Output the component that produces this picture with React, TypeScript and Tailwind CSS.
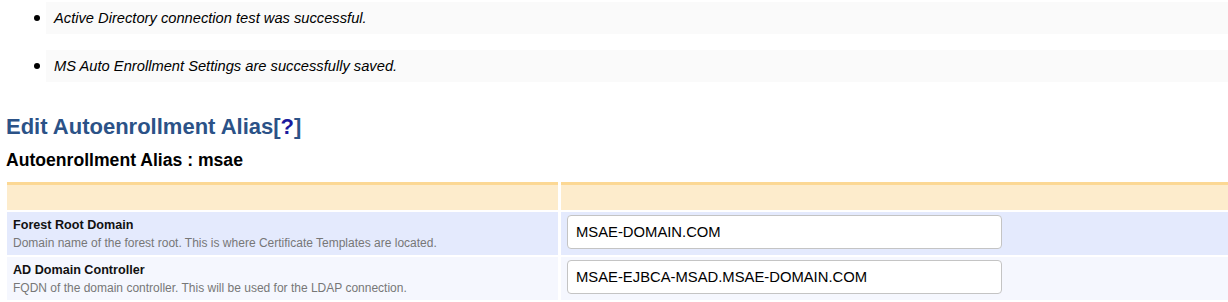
import React from "react";

const messages = [
  "Active Directory connection test was successful.",
  "MS Auto Enrollment Settings are successfully saved.",
];

const rows = [
  {
    label: "Forest Root Domain",
    help: "Domain name of the forest root. This is where Certificate Templates are located.",
    value: "MSAE-DOMAIN.COM",
    bg: "bg-[#e4eafd]",
  },
  {
    label: "AD Domain Controller",
    help: "FQDN of the domain controller. This will be used for the LDAP connection.",
    value: "MSAE-EJBCA-MSAD.MSAE-DOMAIN.COM",
    bg: "bg-[#f5f7fe]",
  },
];

export default function App() {
  return (
    <div className="flex h-[302px] w-[1228px] flex-col overflow-hidden bg-white font-['Liberation_Sans',Arial,sans-serif] text-black">
      <ul className="flex flex-col gap-[16px] pt-[2px]">
        {messages.map((m) => (
          <li key={m} className="ml-[46px] flex h-[32px] items-center bg-[#fafafa]">
            <span className="-ml-[12px] mr-[14px] h-[6px] w-[6px] rounded-full bg-black" />
            <span className="text-[14.7px] italic">{m}</span>
          </li>
        ))}
      </ul>

      <h2 className="ml-[6px] mt-[32px] text-[22px] font-bold leading-[26px] text-[#2b5287]">
        Edit Autoenrollment Alias[<span className="text-[#1a1a9e]">?</span>]
      </h2>
      <h3 className="ml-[6px] mt-[10px] text-[17.6px] font-bold leading-[20px]">Autoenrollment Alias : msae</h3>

      <div className="ml-[7px] mt-[12px] grid grid-cols-[551px_1fr] gap-x-[3px] gap-y-[2px]">
        <div className="h-[28px] border-t-[3px] border-[#fcd894] bg-[#fdeccc]" />
        <div className="h-[28px] border-t-[3px] border-[#fcd894] bg-[#fdeccc]" />
        {rows.map((r) => (
          <React.Fragment key={r.label}>
            <div className={`${r.bg} min-h-[43px] px-[6px] pb-[4px] pt-[5px]`}>
              <div className="text-[12.6px] font-bold leading-[16px] text-[#111]">{r.label}</div>
              <div className="mt-[3px] text-[12px] leading-[14px] text-[#777]">{r.help}</div>
            </div>
            <div className={`${r.bg} min-h-[43px] px-[6px] pb-[4px] pt-[3px]`}>
              <div className="flex h-[34px] w-[435px] items-center rounded-[4px] border border-[#c4c4c4] bg-white px-[8px] text-[14.8px]">
                {r.value}
              </div>
            </div>
          </React.Fragment>
        ))}
      </div>
    </div>
  );
}
